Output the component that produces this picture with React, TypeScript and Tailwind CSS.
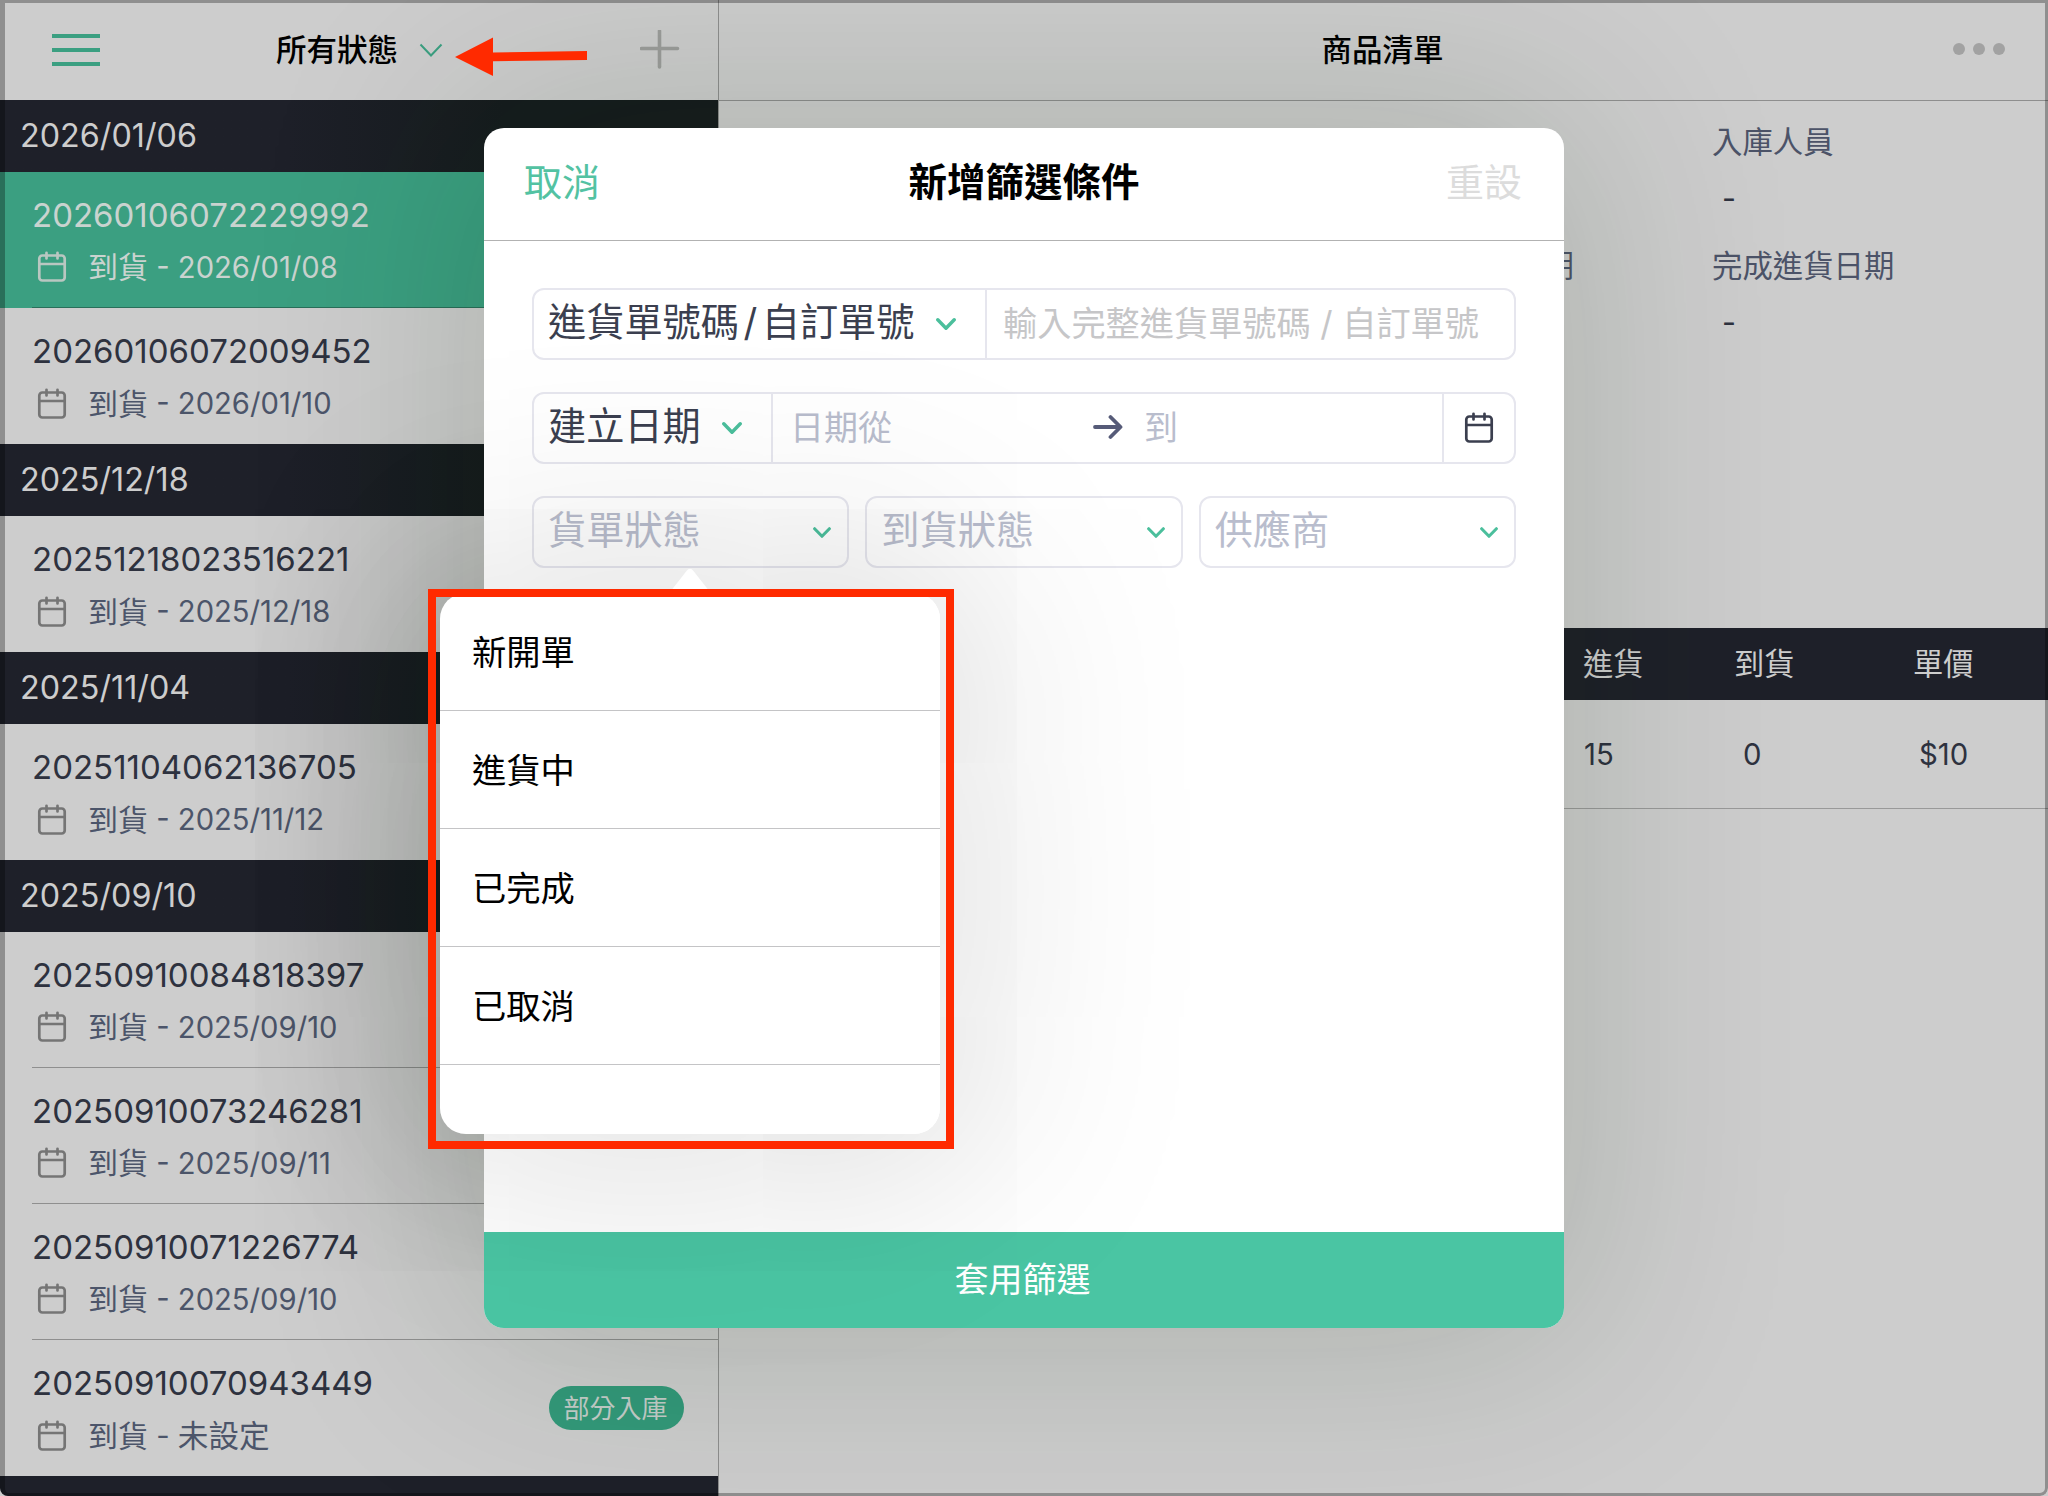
import { useState } from 'react'
import clsx from 'clsx'

type Order = { no: string; arrival?: string; badge?: string }
type Group = { date: string; orders: Order[] }

const GROUPS: Group[] = [
  { date: '2026/01/06', orders: [
    { no: '20260106072229992', arrival: '2026/01/08' },
    { no: '20260106072009452', arrival: '2026/01/10' },
  ] },
  { date: '2025/12/18', orders: [{ no: '20251218023516221', arrival: '2025/12/18' }] },
  { date: '2025/11/04', orders: [{ no: '20251104062136705', arrival: '2025/11/12' }] },
  { date: '2025/09/10', orders: [
    { no: '20250910084818397', arrival: '2025/09/10' },
    { no: '20250910073246281', arrival: '2025/09/11' },
    { no: '20250910071226774', arrival: '2025/09/10' },
    { no: '20250910070943449', badge: '部分入庫' },
  ] },
]

const STATUSES = ['新開單', '進貨中', '已完成', '已取消']

function Calendar({ className }: { className?: string }) {
  return (
    <svg className={clsx('h-8 w-8', className)} viewBox="0 0 32 32" fill="none" stroke="currentColor" strokeWidth="2.7" strokeLinecap="round">
      <rect x="3.3" y="4.5" width="25.4" height="25" rx="3" />
      <path d="M3.3 13H28.7M10.5 1.8V7.4M21.5 1.8V7.4" />
    </svg>
  )
}

function Chevron({ className }: { className?: string }) {
  return (
    <svg className={clsx('shrink-0 text-[#4bbf9c]', className)} viewBox="0 0 20 12" fill="none" stroke="currentColor" strokeWidth="3.4" strokeLinecap="round" strokeLinejoin="round">
      <path d="M1.8 1.8L10 10.2L18.2 1.8" />
    </svg>
  )
}

function OrderRow({ order, active, divider, onClick }: { order: Order; active: boolean; divider: boolean; onClick: () => void }) {
  return (
    <div onClick={onClick} className={clsx('flex h-[136px] flex-col pl-8', active ? 'bg-[#3b9f81] text-[#c9d3cf]' : 'text-[#2e323f]')}>
      <div className="flex flex-1 items-center justify-between pr-[34px]">
        <div className="pt-1">
          <div className="flex h-[52px] items-center text-[33px]">{order.no}</div>
          <div className={clsx('flex h-[52px] items-center text-[29.2px]', !active && 'text-[#4c556a]')}>
            <Calendar className={clsx('-mt-px ml-1 mr-5', active ? 'text-[#b9c7c1]' : 'text-[#757575]')} />
            <span className="text-[30px]">到貨</span>
            <span className="whitespace-pre"> - {order.arrival}</span>
            {!order.arrival && <span className="text-[30.6px]">未設定</span>}
          </div>
        </div>
        {order.badge && (
          <span className="flex h-11 w-[135px] items-center justify-center rounded-full bg-[#33997a] pr-0.5 text-[26px] text-[#c4cdc9]">{order.badge}</span>
        )}
      </div>
      {divider && <div className="h-px bg-black/30" />}
    </div>
  )
}

function Sidebar() {
  const [selected, setSelected] = useState('20260106072229992')
  return (
    <aside className="flex w-[719px] flex-col border-r border-[#8e8e8e]">
      <header className="flex h-[100px] shrink-0 items-center">
        <div className="ml-[52px] flex w-12 flex-col gap-2.5">
          <i className="h-1 bg-[#3b9f81]" />
          <i className="h-1 bg-[#3b9f81]" />
          <i className="h-1 bg-[#3b9f81]" />
        </div>
        <h1 className="ml-[176px] text-[30.5px] font-medium text-black">所有狀態</h1>
        <svg className="ml-[21px] h-3.5 w-6" viewBox="0 0 24 14" fill="none" stroke="#3b9f81" strokeWidth="2">
          <path d="M1.5 1.5L12 12.5L22.5 1.5" />
        </svg>
        <svg className="ml-auto mr-[38px] h-10 w-10" viewBox="0 0 40 40" stroke="#9c9d9b" strokeWidth="3.6" strokeLinecap="round">
          <path d="M1.5 18.5H37.5M19.5 1V37" />
        </svg>
      </header>
      {GROUPS.map((g) => (
        <section key={g.date} className="shrink-0">
          <div className="flex h-[72px] items-center bg-[#1e2029] bg-linear-to-r from-[#1e2029] from-40% to-[#161c1e] to-70% pl-5 pt-px text-[32.3px] text-[#cdcdcd]">{g.date}</div>
          {g.orders.map((o, i) => (
            <OrderRow key={o.no} order={o} active={o.no === selected} divider={i < g.orders.length - 1} onClick={() => setSelected(o.no)} />
          ))}
        </section>
      ))}
      <div className="flex-1 bg-[#1e2029]" />
    </aside>
  )
}

function Detail() {
  return (
    <main className="flex flex-1 flex-col">
      <header className="grid h-[101px] grid-cols-[1fr_auto_1fr] items-center border-b border-[#8e8e8e] pr-[3px]">
        <h2 className="col-start-2 pl-px text-[30.5px] font-medium text-black">商品清單</h2>
        <div className="mb-0.5 mr-10 flex gap-2 justify-self-end">
          <i className="h-3 w-3 rounded-full bg-[#a2a2a2]" />
          <i className="h-3 w-3 rounded-full bg-[#a2a2a2]" />
          <i className="h-3 w-3 rounded-full bg-[#a2a2a2]" />
        </div>
      </header>
      <div className="grid h-[527px] grid-cols-[855px_1fr] content-start pt-4 text-[30.4px] text-[#4c5368]">
        <div className="col-start-2 ml-[138px] h-[51px] leading-[51px]">入庫人員</div>
        <div className="col-start-2 ml-[148px] h-[73px] leading-[61px] text-[#2e323f]">-</div>
        <div className="h-[51px] justify-self-end leading-[51px]">預計進貨日期</div>
        <div className="ml-[138px] h-[51px] leading-[51px]">完成進貨日期</div>
        <div className="col-start-2 ml-[148px] h-[73px] leading-[61px] text-[#2e323f]">-</div>
      </div>
      <div className="grid h-[72px] grid-cols-[181px_124px_232px] items-center justify-end bg-[#1e2029] pr-px pt-0.5 text-[30.3px] text-[#cdcdcd]">
        <div className="pl-[73px]">進貨</div>
        <div className="pl-[43px]">到貨</div>
        <div className="pl-[98px]">單價</div>
      </div>
      <div className="grid h-[109px] grid-cols-[181px_124px_232px] items-center justify-end border-b border-[#999] pr-px pt-0.5 text-[29.3px] text-[#2e323f]">
        <div className="pl-[74px]">15</div>
        <div className="pl-[52px]">0</div>
        <div className="pl-[104px]">$10</div>
      </div>
    </main>
  )
}

const field = 'flex h-[72px] items-center rounded-xl border-2 border-[#e6e6ee] text-[38.2px]'

function StatusSelect({ label }: { label: string }) {
  return (
    <div className={clsx(field, 'justify-between pl-[14px] pr-4 text-[#b9bdcd]')}>
      <span className="pb-0.5">{label}</span>
      <Chevron className="h-[11px] w-[18px]" />
    </div>
  )
}

function FilterDialog() {
  return (
    <div className="absolute left-[484px] top-32 flex h-[1200px] w-[1080px] flex-col overflow-hidden rounded-[20px] bg-white">
      <header className="grid h-[113px] grid-cols-[1fr_auto_1fr] items-center border-b border-[#b2b2b2] px-10 pb-0.5 text-[38px]">
        <button className="justify-self-start pb-0.5 text-left text-[#53c2a2]">取消</button>
        <h3 className="text-[38.5px] font-bold text-black">新增篩選條件</h3>
        <button className="justify-self-end pb-0.5 pr-0.5 text-[#dcdcdc]">重設</button>
      </header>
      <div className="flex flex-1 flex-col gap-8 px-12 pt-[47px]">
        <div className={field}>
          <div className="flex h-full w-[453px] items-center justify-between border-r-2 border-[#e6e6ee] pl-[14px] pr-[29px] text-[#3b3f4f]">
            <span className="whitespace-nowrap pb-0.5">進貨單號碼<span className="mx-[4.5px]">/</span>自訂單號</span>
            <Chevron className="h-3 w-5" />
          </div>
          <span className="pb-px pl-4 text-[34.2px] text-[#c6c6c8]">輸入完整進貨單號碼 / 自訂單號</span>
        </div>
        <div className={field}>
          <div className="flex h-full w-[239px] items-center justify-between border-r-2 border-[#e6e6ee] pl-[14px] pr-[29px] text-[#3b3f4f]">
            <span className="pb-0.5">建立日期</span>
            <Chevron className="h-3 w-5" />
          </div>
          <span className="w-[320px] pb-0.5 pl-[17px] text-[34px] text-[#b9bdcd]">日期從</span>
          <svg className="-mt-0.5 h-7 w-[30px]" viewBox="0 0 30 28" fill="none" stroke="#565b78" strokeWidth="3.8" strokeLinecap="round" strokeLinejoin="round">
            <path d="M2 14H27M17.5 4L27.5 14L17.5 24" />
          </svg>
          <span className="pb-0.5 pl-[21px] text-[34px] text-[#b9bdcd]">到</span>
          <div className="ml-auto flex h-full w-[72px] items-center justify-center border-l-2 border-[#e6e6ee] text-[#3b3f4f]">
            <Calendar className="mb-px" />
          </div>
        </div>
        <div className="grid grid-cols-3 gap-4">
          <StatusSelect label="貨單狀態" />
          <StatusSelect label="到貨狀態" />
          <StatusSelect label="供應商" />
        </div>
      </div>
      <button className="h-24 bg-[#4ac5a3] pb-0.5 pr-[3px] text-[34px] text-white">套用篩選</button>
    </div>
  )
}

function StatusPopover() {
  return (
    <div className="absolute left-[440px] top-[593px] w-[500px]">
      <div className="h-[541px] overflow-hidden rounded-[26px] bg-white">
        {STATUSES.map((s) => (
          <div key={s} className="flex h-[118px] items-center border-b border-[#c4c4c6] pl-8 pt-0.5 text-[34.3px] text-black">{s}</div>
        ))}
      </div>
      <svg className="absolute -top-[25px] left-[224px] h-[26px] w-[52px]" viewBox="0 0 52 26" fill="#fff">
        <path d="M0 26C4 26 6 24 8 21.5L22.5 3Q26 -1.5 29.5 3L44 21.5C46 24 48 26 52 26Z" />
      </svg>
    </div>
  )
}

export default function App() {
  return (
    <div className="h-[1496px] w-[2048px] bg-[#cdcdcd]">
      <div className="relative flex h-full w-full overflow-hidden rounded-b-lg bg-[#cdcdcd] font-['Inter','Noto_Sans_CJK_TC',sans-serif]">
        <Sidebar />
        <Detail />
        {/* soft shadows sit under each floating layer */}
        <div className="absolute left-[484px] top-32 h-[1200px] w-[1080px] rounded-[20px] shadow-[0_0_220px_20px_rgba(10,35,0,0.16)]" />
        <div className="absolute left-[440px] top-[593px] h-[541px] w-[500px] rounded-[26px] shadow-[0_0_200px_10px_rgba(10,30,0,0.13)]" />
        <FilterDialog />
        <div className="absolute left-[440px] top-[593px] h-[541px] w-[500px] rounded-[26px] shadow-[0_0_220px_50px_rgba(0,0,0,0.13)]" />
        <StatusPopover />
        {/* callouts */}
        <div className="absolute left-[428px] top-[589px] h-[560px] w-[526px] border-8 border-[#ff2a00]" />
        <svg className="absolute left-[454px] top-9 h-11 w-[136px]" viewBox="0 0 136 44" fill="#ff2a00">
          <path d="M1 21L39 1.5V16.5L133 15V24L39 25.2V40Z" />
        </svg>
        <div className="pointer-events-none absolute inset-0 rounded-b-lg border-[3px] border-l-[5px] border-black/30" />
      </div>
    </div>
  )
}
